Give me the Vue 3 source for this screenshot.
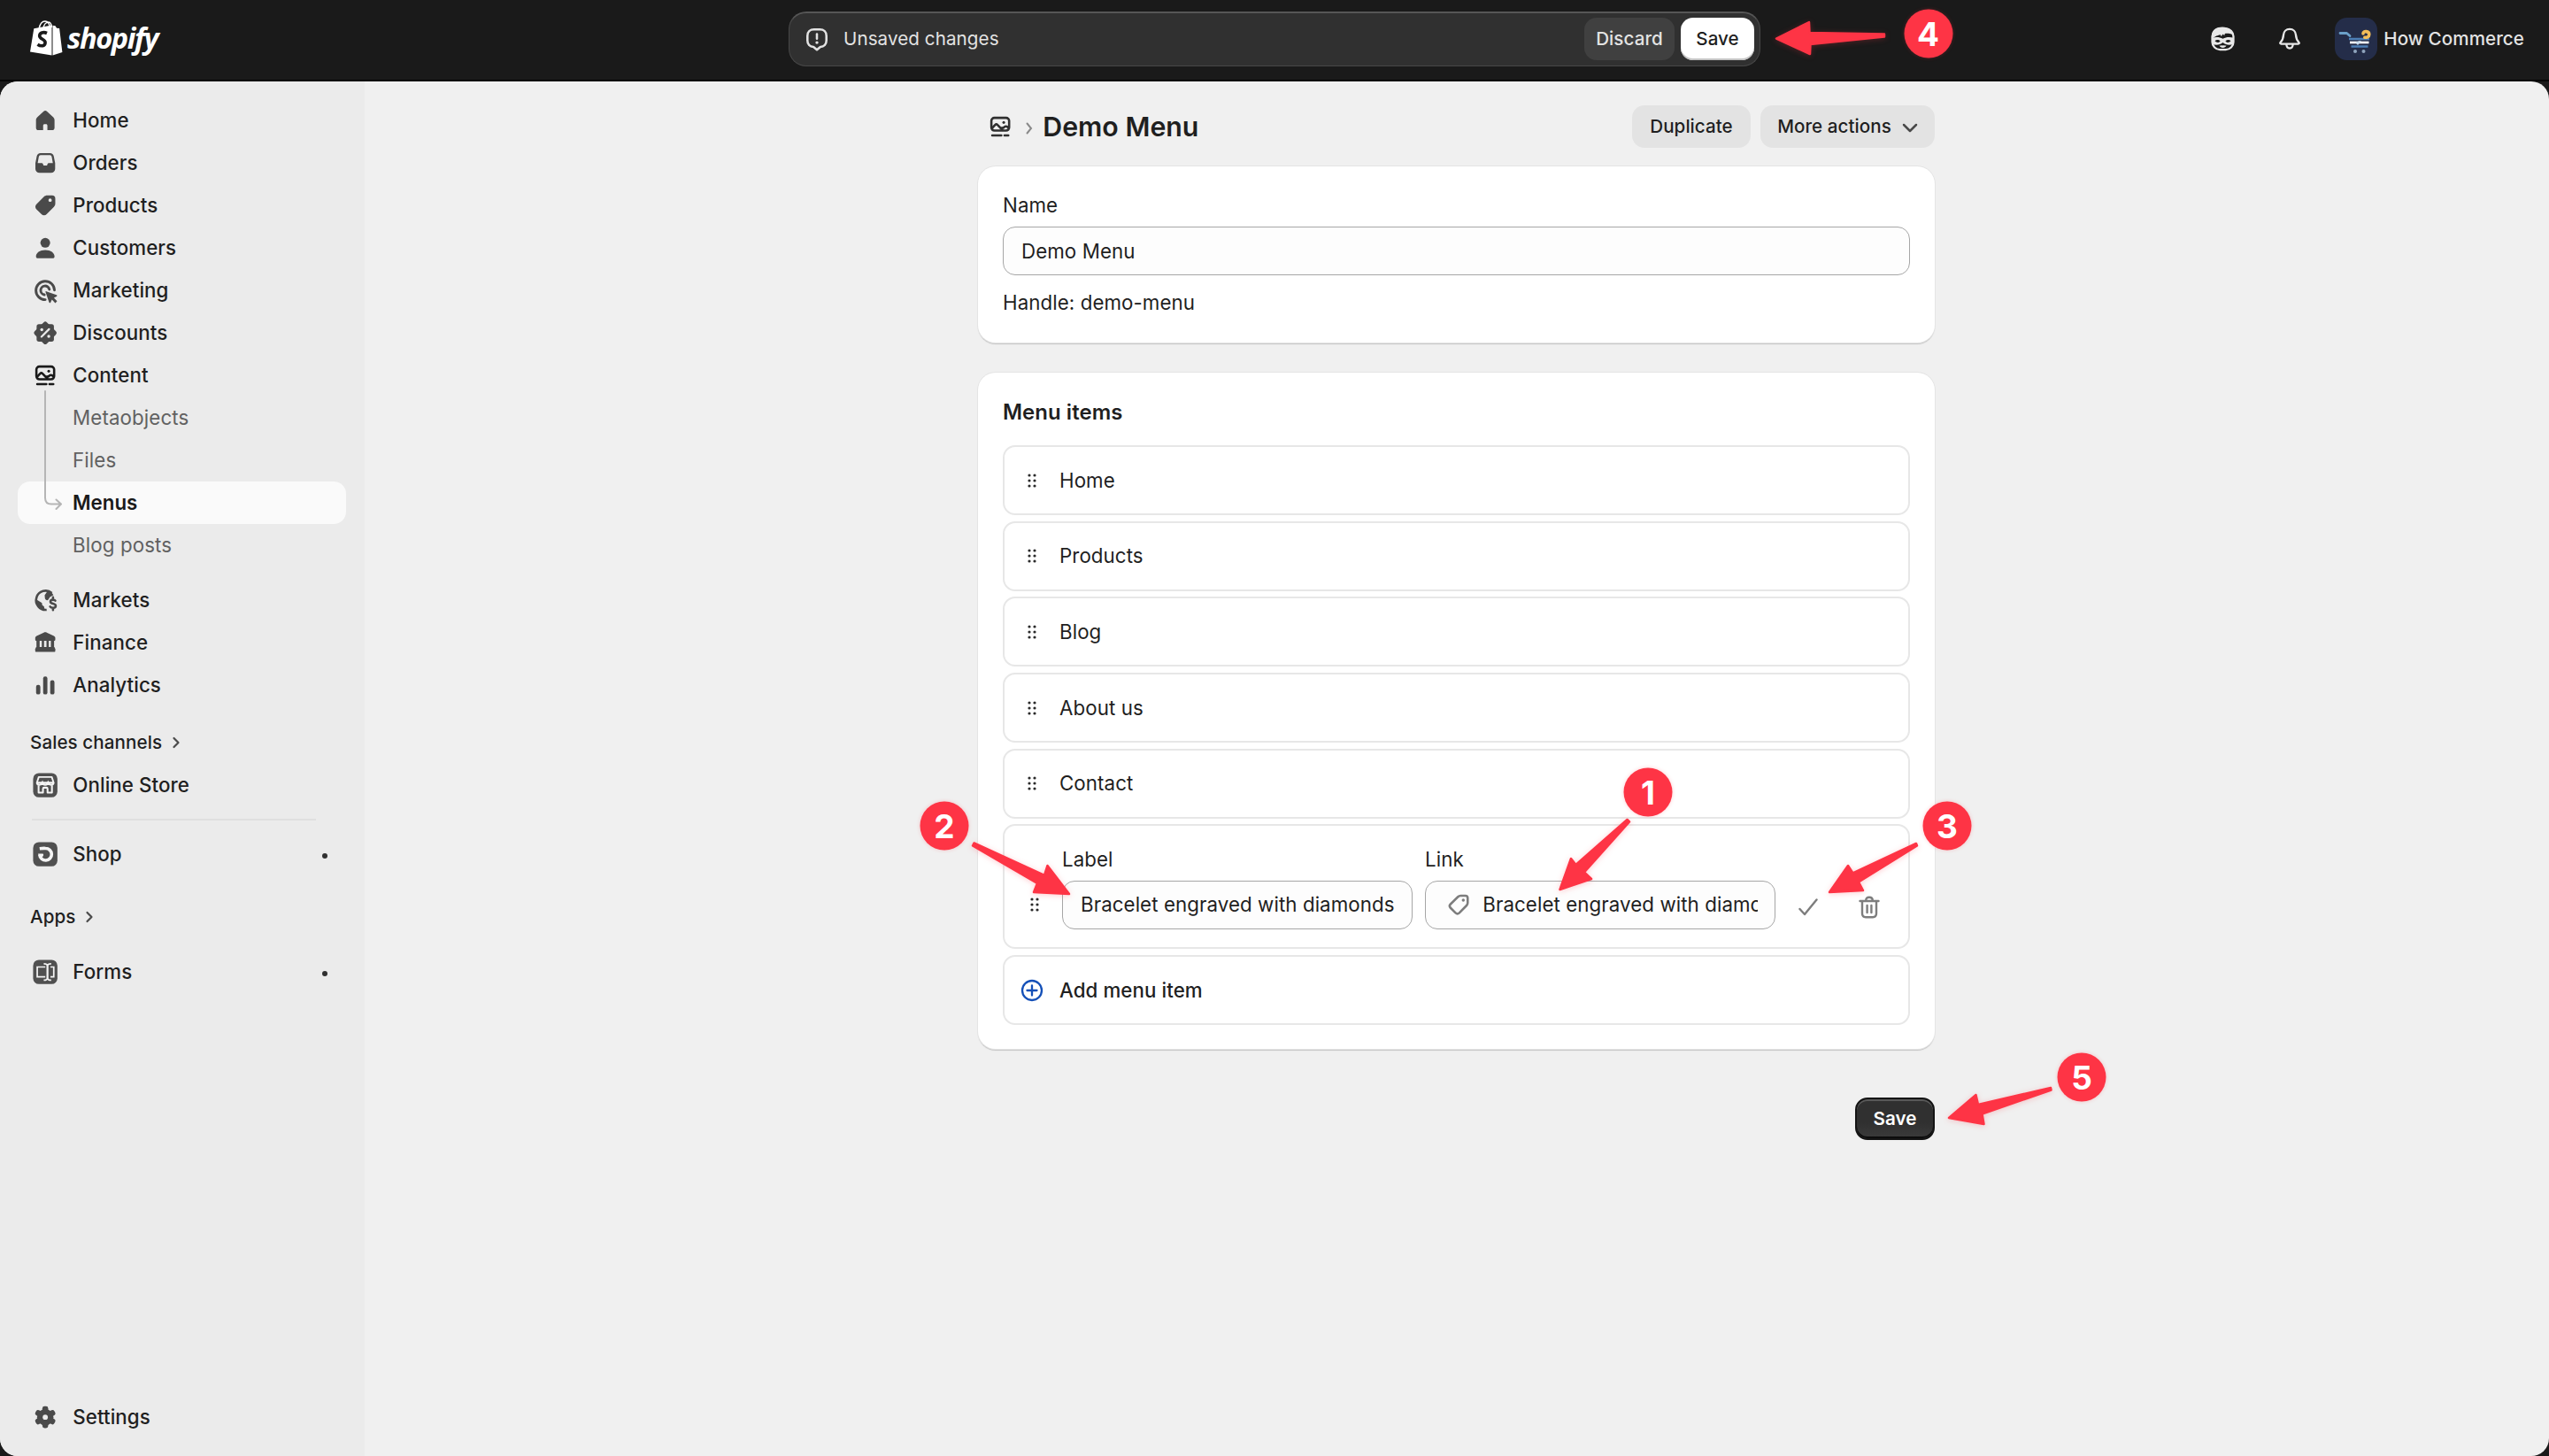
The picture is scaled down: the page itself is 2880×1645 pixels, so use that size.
<script setup>
const icons = {
  home: '<path d="M8.8 4.1a1.8 1.8 0 0 1 2.4 0l4.1 3.8c.5.5.8 1.1.8 1.8v5.1c0 .9-.7 1.6-1.6 1.6h-3.1v-3c0-.6-.4-1-1-1h-.8c-.6 0-1 .4-1 1v3H5.5c-.9 0-1.6-.7-1.6-1.6V9.700c0-.7.3-1.300.8-1.800Z"/>',
  orders: '<path fill-rule="evenodd" d="M6.900 3.500h6.200a2.600 2.600 0 0 1 2.500 2l.9 4.600v3.700a2.700 2.700 0 0 1-2.700 2.700H6.200a2.700 2.700 0 0 1-2.700-2.700v-3.700l.9-4.600a2.600 2.600 0 0 1 2.500-2Zm0 1.300a1.200 1.200 0 0 0-1.150 1L5 10.100h2.500c.5 0 .9.3 1.050.7l.3.8h2.300l.3-.8c.15-.4.55-.7 1.050-.7H15l-.75-4.300a1.200 1.200 0 0 0-1.150-1Z"/>',
  products: '<path fill-rule="evenodd" d="M11.300 3.400h3.200a2.100 2.100 0 0 1 2.100 2.100v3.300c0 .8-.3 1.500-.9 2.100l-4.800 4.900a2.400 2.400 0 0 1-3.400 0l-3.300-3.200a2.400 2.400 0 0 1 0-3.400l4.900-4.900c.6-.6 1.400-.9 2.200-.9Zm1.900 4.200a1.100 1.100 0 1 0 0-2.200 1.100 1.100 0 0 0 0 2.200Z"/>',
  customers: '<circle cx="10" cy="6.600" r="3.200"/><path d="M3.900 15.600c0-2.300 2.500-4.200 6.100-4.200s6.100 1.900 6.100 4.200c0 .8-.5 1.200-1.200 1.200H5.100c-.7 0-1.200-.4-1.200-1.200Z"/>',
  marketing: '<path fill="none" stroke="currentColor" stroke-width="1.700" stroke-linecap="round" d="M16.050 9.800A6.100 6.100 0 1 0 10 16.100"/><path fill="none" stroke="currentColor" stroke-width="1.700" stroke-linecap="round" d="M12.700 9.300A2.900 2.900 0 1 0 9.400 12.800"/><path d="M10.700 10.600l6.700 2.400c.5.200.5.8 0 1l-1.700.9 2.100 2.200-1.200 1.200-2.200-2.200-.9 1.800c-.2.500-.8.400-1-.1l-2.300-6.700c-.1-.4.200-.7.500-.5Z"/>',
  discounts: '<rect x="4.300" y="4.300" width="11.400" height="11.400" rx="1.500"/><rect x="4.300" y="4.300" width="11.400" height="11.400" rx="1.500" transform="rotate(45 10 10)"/><path stroke="#ebebeb" stroke-width="1.300" stroke-linecap="round" d="M12.500 7.500l-5 5"/><circle cx="7.700" cy="7.900" r="1" fill="#ebebeb"/><circle cx="12.300" cy="12.200" r="1" fill="#ebebeb"/>',
  content: '<g fill="none" stroke="currentColor" stroke-width="1.500" stroke-linejoin="round"><rect x="4.150" y="4.150" width="11.700" height="8.400" rx="2"/><path d="M4.400 11.200l2.200-2.400c.5-.5 1.100-.5 1.600 0l3.500 3.600M10.800 11.400c.4-1.100 1.100-.4 1.600-.9.7-1 1.800-1 3.200.3"/><path stroke-linecap="round" d="M4.700 15.700h6M12.800 15.700h2.500"/></g><circle cx="12.300" cy="7.200" r=".9"/>',
  markets: '<path fill="none" stroke="currentColor" stroke-width="1.500" d="M14.300 5.200A6.300 6.300 0 1 0 10.900 16.300"/><path d="M3.600 9.200l3.800 2.300c.6.400.6 1 .5 1.600l1.300 1.100.4 2.300c-3.500 0-6.200-3-6-7.300ZM9.600 6.700l1.700-2.400 2.900.6 1.200 1.700-2.300 1.300-1.200 1.900c-.6.700-2-.1-2.100-1Z"/><path fill="none" stroke="currentColor" stroke-width="1.500" stroke-linecap="round" d="M16.600 10.300c-.5-.8-3.200-1-3.200.6 0 1.800 3.500.9 3.500 2.800 0 1.700-3 1.600-3.700.5M15.100 8.100v1M15.100 15.500v1"/>',
  finance: '<path d="M9 3.300c.6-.3 1.400-.3 2 0l4.700 2.200c.5.300.9.700.9 1.300v1.100c0 .6-.3.9-.9.9H4.300c-.6 0-.9-.3-.9-.9V6.800c0-.6.4-1 .9-1.300ZM4.200 8.500h2.100v4.900H4.200zM7.700 8.500h1.500v4.900H7.700zM10.800 8.500h1.500v4.900h-1.500zM13.700 8.500h2.100v4.900h-2.100z"/><path d="M4 12.900h12l.6 1.200v1.300c0 .4-.2.700-.6.700H4c-.4 0-.6-.3-.6-.7v-1.300Z"/>',
  analytics: '<rect x="3.950" y="9.800" width="2.800" height="6.300" rx="1.300"/><rect x="8.600" y="4.300" width="2.800" height="11.800" rx="1.300"/><rect x="13.250" y="6.700" width="2.800" height="9.400" rx="1.300"/>',
  store: '<rect x="2" y="2" width="16" height="16" rx="3.800" fill="#505050"/><path d="M5.700 4.600h8.600l1.200 3.700H4.500Z" fill="none" stroke="#f4f4f4" stroke-width="1.100" stroke-linejoin="round"/><path fill="none" stroke="#f4f4f4" stroke-width="1.400" d="M4.600 8.400c.3 1.700 2.600 1.700 3.500 0 .6 1.600 3.200 1.600 3.800 0 .9 1.700 3.200 1.700 3.500 0"/><path fill="none" stroke="#f4f4f4" stroke-width="1.200" stroke-linejoin="round" d="M5.600 10v4.900h2.900v-2.500c0-.5.300-.8.800-.8h1.400c.5 0 .8.300.8.800v2.500h2.900V10"/>',
  shop: '<rect x="2" y="2" width="16" height="16" rx="3.800" fill="#505050"/><path d="M6.300 6.300c1.400-.2 2.400-.3 3.900-.2a3.950 3.950 0 1 1-3.900 4.300" fill="none" stroke="#f4f4f4" stroke-width="2.100" stroke-linejoin="round"/><path d="M5.300 9.600h3.100c.6.200.6 1.700-.6 2.200-1.300.3-2.500-.8-2.500-2.200Z" fill="#f4f4f4"/>',
  forms: '<rect x="2" y="2" width="16" height="16" rx="3.800" fill="#505050"/><path d="M10 6.700H4.700v6.500H10M13.400 6.700h2.200v6.500h-2.200M9 4.600c1.300 0 2.300.4 2.300 1.300v8.200c0 .9-1 1.300-2.300 1.300M13.900 4.600c-1.300 0-2.300.4-2.300 1.300v8.200c0 .9 1 1.300 2.300 1.300" fill="none" stroke="#f4f4f4" stroke-width="1"/>',
  settings: '<circle cx="10" cy="10" r="5.400"/><rect x="8.100" y="2.800" width="3.800" height="14.400" rx="1.400"/><rect x="8.100" y="2.800" width="3.800" height="14.400" rx="1.400" transform="rotate(60 10 10)"/><rect x="8.100" y="2.800" width="3.800" height="14.400" rx="1.400" transform="rotate(120 10 10)"/><circle cx="10" cy="10" r="1.700" fill="#ebebeb"/>',
}

const primary = [
  { label: 'Home', icon: 'home' },
  { label: 'Orders', icon: 'orders' },
  { label: 'Products', icon: 'products' },
  { label: 'Customers', icon: 'customers' },
  { label: 'Marketing', icon: 'marketing' },
  { label: 'Discounts', icon: 'discounts' },
  { label: 'Content', icon: 'content', current: true },
]
const contentPages = ['Metaobjects', 'Files', 'Menus', 'Blog posts']
const secondary = [
  { label: 'Markets', icon: 'markets' },
  { label: 'Finance', icon: 'finance' },
  { label: 'Analytics', icon: 'analytics' },
]
const menuItems = ['Home', 'Products', 'Blog', 'About us', 'Contact']

const steps = [
  { n: 1, x: 1862, y: 895, arrow: '1838.500,926 1780.500,977 1775,970 1762.500,1005 1798,993 1790,985.500 1841,928.500' },
  { n: 2, x: 1067, y: 933, arrow: '1100.500,952.500 1180,989 1183.500,978 1208,1010 1168,1008 1172,998 1099,955.500' },
  { n: 3, x: 2200, y: 933, arrow: '2165,953 2093.500,986.500 2088,978 2067,1008 2105,1006 2100,996.500 2166,955.500' },
  { n: 4, x: 2178.500, y: 38, arrow: '2129,38.500 2044.500,37 2044,25 2007,43.500 2045,61 2045.500,50 2129,41.500' },
  { n: 5, x: 2352, y: 1217, arrow: '2317,1229 2235,1248 2232.500,1237 2202,1263 2241.500,1270 2239.500,1258.500 2317.500,1231.500' },
]
</script>

<template>
  <div class="app">
    <header class="topbar">
      <div class="logo">
        <svg class="bag" viewBox="0 0 38 42">
          <path fill="none" stroke="#fff" stroke-width="1.500" d="M10 11C11 5 14 2 17 2c3 0 5 3 5.500 8M15 10c.5-4 3-7 6-7 2 0 3 2 3.500 6" />
          <path fill="#fff" d="M4.300 10.300 24.500 6.500V40.500L0 36.500Z" />
          <path fill="#fff" d="M25.500 6.700 28.500 7.200l1.600 2.500 3 .4L36.400 37 25.500 40.500Z" />
          <path fill="none" stroke="#1a1a1a" stroke-width="3.600" d="M19 15.500c-4-1.800-8.300-.5-8.300 3 0 4 6.400 3.500 6.400 7.500 0 4-4.500 5-8.600 2.200" />
        </svg>
        <span class="wordmark">shopify</span>
      </div>

      <div class="savebar">
        <svg class="alert" viewBox="0 0 20 20">
          <path fill="none" stroke="currentColor" stroke-width="1.500" stroke-linejoin="round" d="M8 3.700h4c2.500 0 4.300 1.700 4.300 4.200v3.200c0 2.500-1.600 4.100-4 4.200L10 17.200l-2.300-1.900c-2.400-.1-4-1.700-4-4.200V7.900C3.700 5.400 5.500 3.700 8 3.700Z" />
          <path stroke="currentColor" stroke-width="1.500" stroke-linecap="round" d="M10 6.800v3" />
          <circle cx="10" cy="12.400" r="1" fill="currentColor" />
        </svg>
        <span class="unsaved">Unsaved changes</span>
        <button class="btn discard">Discard</button>
        <button class="btn save-light">Save</button>
      </div>

      <div class="account">
        <svg class="sidekick" viewBox="0 0 28 28">
          <rect x="1.600" y="2" width="24.800" height="24.500" rx="9" fill="none" stroke="#e8e8e8" stroke-width="2.400" />
          <path fill="#e8e8e8" d="M1 10C1.500 3 6.500 0 13.500 0S26 3.500 27 10c-2.500-2-5-2.500-9-2.500-1.500 0-2 .5-2.200 2.500-.8-.6-1-1-1.300-1.700-1 .5-1.800 1.200-2 2.700-.8-.7-1-1-1.200-1.900C8 9.800 5.500 10.500 1 14Z" />
          <path fill="#e8e8e8" fill-rule="evenodd" d="M1.500 12.800c4-1.300 8.500-1.300 12.500 1 4-2.300 8.500-2.300 12.500-1V20c-4.500 1.800-9 1.300-12.500-1.800C10.500 21.300 6 21.800 1.500 20Zm3.200 3.500c2 2.300 4.500 2.300 6.300.2-2-2-4.500-2-6.300-.2Zm12.300.2c1.800 2.100 4.300 2.100 6.300-.2-1.800-1.800-4.300-1.800-6.300.2Z" />
          <path fill="#e8e8e8" d="M9.800 21.600c1.400.6 2.400-.6 4.200.2 1.800-.8 2.800.4 4.200-.2-.8 1.800-2.300 2.700-4.200 2.700s-3.400-.9-4.200-2.700Z" />
        </svg>
        <svg class="bell" viewBox="0 0 28 30" fill="none" stroke="#e8e8e8" stroke-width="2.500" stroke-linejoin="round">
          <path d="M14 3c-4.500 0-7.200 3-7.500 7-.3 4.500-.8 6-3.600 9-1 1.200-.4 2 .8 2h20.600c1.200 0 1.800-.8.8-2-2.800-3-3.300-4.500-3.600-9-.3-4-3-7-7.500-7ZM10 21.500c.2 3 1.800 4.800 4 4.800s3.800-1.800 4-4.800" />
        </svg>
        <div class="store">
          <svg class="store-logo" viewBox="0 0 48 48">
            <rect width="48" height="48" rx="13.700" fill="#242d49" />
            <path fill="none" stroke="#6ba0c8" stroke-width="2.800" stroke-linecap="round" stroke-linejoin="round" d="M6 17.500h7.500l3.500 3" />
            <path stroke="#4d7fb5" stroke-width="2.400" d="M16 24h23M18.500 32.500h19" />
            <path stroke="#fff" stroke-width="2.600" d="M17 28h21.500" />
            <path fill="#c9dcee" d="M23 28l3 3 4-4.500-2-.5Z" />
            <path fill="none" stroke="#f2bd58" stroke-width="3.600" stroke-linecap="round" d="M32 18c0-3.500 6.800-3.200 6.800 1 0 3-3 3.500-5 3.200" />
            <circle cx="23" cy="38" r="2" fill="#8fa4bd" />
            <circle cx="32.500" cy="38" r="2" fill="#8fa4bd" />
          </svg>
          <span>How Commerce</span>
        </div>
      </div>
    </header>

    <div class="frame">
      <aside class="sidebar">
        <nav>
          <a v-for="item in primary" :key="item.label" class="nav-item" :class="{ current: item.current }">
            <svg class="icon" viewBox="0 0 20 20" fill="currentColor" v-html="icons[item.icon]" />
            <span>{{ item.label }}</span>
          </a>
          <div class="subnav">
            <a v-for="page in contentPages" :key="page" class="nav-item sub" :class="{ selected: page === 'Menus' }">{{ page }}</a>
            <svg class="branch" viewBox="0 0 24 136" fill="none" stroke="#b5b5b5" stroke-width="2" stroke-linecap="round" stroke-linejoin="round">
              <path d="M3 1v120.500c0 5 2 7 7 7h10.500M15.500 123.500l5.500 5-5.500 5.500" />
            </svg>
          </div>
          <div class="nav-group">
            <a v-for="item in secondary" :key="item.label" class="nav-item">
              <svg class="icon" viewBox="0 0 20 20" fill="currentColor" v-html="icons[item.icon]" />
              <span>{{ item.label }}</span>
            </a>
          </div>
          <div class="nav-title channels">
            Sales channels
            <svg viewBox="0 0 10 14"><path d="M2.500 2l5 5-5 5" /></svg>
          </div>
          <a class="nav-item">
            <svg class="icon" viewBox="0 0 20 20" v-html="icons.store" />
            <span>Online Store</span>
          </a>
          <hr />
          <a class="nav-item shop">
            <svg class="icon" viewBox="0 0 20 20" v-html="icons.shop" />
            <span>Shop</span>
            <i class="dot"></i>
          </a>
          <div class="nav-title apps">
            Apps
            <svg viewBox="0 0 10 14"><path d="M2.500 2l5 5-5 5" /></svg>
          </div>
          <a class="nav-item forms">
            <svg class="icon" viewBox="0 0 20 20" v-html="icons.forms" />
            <span>Forms</span>
            <i class="dot"></i>
          </a>
        </nav>
        <a class="nav-item">
          <svg class="icon" viewBox="0 0 20 20" fill="currentColor" v-html="icons.settings" />
          <span>Settings</span>
        </a>
      </aside>

      <main class="page">
        <div class="page-head">
          <svg class="icon crumb" viewBox="0 0 20 20" fill="currentColor" v-html="icons.content" />
          <svg class="crumb-sep" viewBox="0 0 8 14"><path d="M1.500 1.500 6 7l-4.500 5.500" /></svg>
          <h1>Demo Menu</h1>
          <button class="btn grey duplicate">Duplicate</button>
          <button class="btn grey more">
            More actions
            <svg viewBox="0 0 18 12"><path d="M2 2l7 7 7-7" /></svg>
          </button>
        </div>

        <section class="card name-card">
          <label>Name</label>
          <div class="input">Demo Menu</div>
          <p>Handle: demo-menu</p>
        </section>

        <section class="card items-card">
          <h2>Menu items</h2>
          <div class="rows">
            <div v-for="item in menuItems" :key="item" class="row">
              <svg class="drag" viewBox="0 0 10 16">
                <template v-for="y in [2, 8, 14]" :key="y">
                  <circle cx="2" :cy="y" r="1.600" /><circle cx="8" :cy="y" r="1.600" />
                </template>
              </svg>
              <span>{{ item }}</span>
            </div>

            <div class="row edit">
              <svg class="drag" viewBox="0 0 10 16">
                <template v-for="y in [2, 8, 14]" :key="y">
                  <circle cx="2" :cy="y" r="1.600" /><circle cx="8" :cy="y" r="1.600" />
                </template>
              </svg>
              <div class="field">
                <label>Label</label>
                <div class="input">Bracelet engraved with diamonds</div>
              </div>
              <div class="field link">
                <label>Link</label>
                <div class="input">
                  <svg class="tag" viewBox="0 0 20 20">
                    <path fill="none" stroke="currentColor" stroke-width="1.500" stroke-linejoin="round" d="M11.200 4.100h3.200c.9 0 1.500.6 1.500 1.500v3.200c0 .7-.2 1.200-.7 1.700l-4.800 4.900a1.800 1.800 0 0 1-2.500 0l-3.300-3.300a1.800 1.800 0 0 1 0-2.500l4.900-4.800c.5-.5 1-.7 1.700-.7Z" />
                    <circle cx="13" cy="7" r="1" fill="currentColor" />
                  </svg>
                  <span class="clip">Bracelet engraved with diamonds</span>
                </div>
              </div>
              <svg class="check" viewBox="0 0 22 20"><path d="M1.500 12l5.500 6L20.500 1.500" /></svg>
              <svg class="trash" viewBox="0 0 24 26">
                <path d="M1.500 6h21M8.200 5.500C8.200 3 9.600 1.800 12 1.800s3.800 1.200 3.800 3.700M4 6.500v13.500c0 3 1.500 4.200 4 4.200h8c2.500 0 4-1.200 4-4.200V6.500M9.600 11v8M14.400 11v8" />
              </svg>
            </div>

            <div class="row add">
              <svg class="plus" viewBox="0 0 26 26"><circle cx="13" cy="13" r="11" /><path d="M13 7.500v11M7.500 13h11" /></svg>
              <span>Add menu item</span>
            </div>
          </div>
        </section>

        <button class="btn save-dark">Save</button>
      </main>
    </div>

    <div class="steps">
      <svg class="arrows" viewBox="0 0 2880 1645">
        <polygon v-for="s in steps" :key="s.n" :points="s.arrow" fill="#fe3445" stroke="#fe3445" stroke-width="2.500" stroke-linejoin="round" />
      </svg>
      <b v-for="s in steps" :key="s.n" class="badge" :style="{ left: s.x + 'px', top: s.y + 'px' }">{{ s.n }}</b>
    </div>
  </div>
</template>

<style>
body {
  background: #1a1a1a;
}
</style>

<style scoped>
* {
  box-sizing: border-box;
}
.app {
  position: relative;
  width: 2880px;
  height: 1645px;
  overflow: hidden;
  background: #1a1a1a;
  color: #1f1f1f;
  font-family: Inter, "Liberation Sans", sans-serif;
  font-size: 22.300px;
  letter-spacing: 0.080px;
  line-height: 34px;
}
svg {
  display: block;
  flex: none;
}
h1, h2, p {
  margin: 0;
}

/* Top bar */
.topbar {
  display: grid;
  grid-template-columns: 1fr 1098px 1fr;
  height: 92px;
  padding: 13px 28px 0 34px;
  border-bottom: 2px solid #050505;
}
.logo {
  display: flex;
  height: 62px;
}
.bag {
  width: 38px;
  height: 42px;
  margin-top: 9px;
}
.wordmark {
  margin: 13px 0 0 4px;
  color: #fff;
  font: italic 700 32.500px/34px "Open Sans", sans-serif;
  letter-spacing: -1.400px;
}
.savebar {
  display: flex;
  align-items: center;
  width: 1098px;
  height: 62px;
  margin-left: -3px;
  padding: 0 6px 1px 14px;
  border: 1.500px solid #484848;
  border-top: 2px solid #565656;
  border-radius: 20px;
  background: #303030;
  color: #e3e3e3;
}
.alert {
  width: 34px;
  height: 34px;
}
.unsaved {
  flex: 1;
  margin-left: 13px;
  font-size: 20.600px;
  letter-spacing: 0.080px;
}
.btn {
  display: flex;
  align-items: center;
  justify-content: center;
  height: 48px;
  padding: 0;
  border: 0;
  border-radius: 14px;
  font: 500 20.600px/28px Inter, sans-serif;
  letter-spacing: 0.050px;
}
.discard {
  width: 102px;
  background: #404040;
  color: #e3e3e3;
}
.save-light {
  width: 83px;
  margin-left: 7px;
  background: #fff;
  color: #1f1f1f;
  box-shadow: inset 0 -2px 0 #c4c4c4;
}
.account {
  display: flex;
  align-items: center;
  justify-content: flex-end;
  height: 62px;
}
.sidekick {
  width: 27px;
  height: 28px;
}
.bell {
  width: 26px;
  height: 28px;
  margin: 0 38px 0 49px;
}
.store {
  display: flex;
  align-items: center;
  gap: 7px;
  color: #e3e3e3;
  font-size: 20.600px;
  font-weight: 500;
}
.store-logo {
  width: 48px;
  height: 48px;
}

/* Frame */
.frame {
  display: flex;
  height: 1553px;
  border-radius: 20px;
  background: #f0f0f0;
  overflow: hidden;
}
.sidebar {
  display: flex;
  flex-direction: column;
  justify-content: space-between;
  width: 412px;
  padding: 20px 21px 20px 20px;
  background: #ebebeb;
}
.nav-item {
  display: flex;
  align-items: center;
  height: 48px;
  padding: 0 21.500px 0 14px;
  border-radius: 14px;
  font-weight: 500;
}
.nav-item span {
  flex: 1;
  margin-left: 14px;
}
.icon {
  width: 34.300px;
  height: 34.300px;
  color: #4a4a4a;
}
.current .icon {
  color: #1a1a1a;
}
.subnav {
  position: relative;
}
.sub {
  padding-left: 62px;
  color: #616161;
  font-weight: 400;
  letter-spacing: 0.120px;
}
.sub.selected {
  background: #fafafa;
  color: #1a1a1a;
  font-weight: 600;
  letter-spacing: 0;
}
.branch {
  position: absolute;
  left: 28px;
  top: -7px;
  width: 24px;
  height: 136px;
}
.nav-group {
  margin-top: 14px;
}
.nav-title {
  display: flex;
  align-items: center;
  gap: 11px;
  height: 48px;
  padding-left: 14px;
  font-size: 20.600px;
  font-weight: 500;
}
.nav-title svg {
  width: 10px;
  height: 14px;
  fill: none;
  stroke: #4a4a4a;
  stroke-width: 2.200;
  stroke-linecap: round;
  stroke-linejoin: round;
}
.channels {
  margin-top: 17px;
}
hr {
  height: 2px;
  margin: 14px 34px 14px 16px;
  border: 0;
  background: #dfdfdf;
}
.dot {
  width: 6px;
  height: 6px;
  margin-top: 3px;
  border-radius: 50%;
  background: #303030;
}
.apps {
  margin-top: 23px;
}
.forms {
  margin-top: 14px;
}

/* Page */
.page {
  width: 1081px;
  margin-left: 693px;
}
.page-head {
  display: flex;
  align-items: center;
  height: 48px;
  margin-top: 27px;
}
.crumb {
  margin-left: 8px;
  color: #303030;
}
.crumb-sep {
  width: 8px;
  height: 14px;
  margin: 4px 0 0 12px;
  fill: none;
  stroke: #8a8a8a;
  stroke-width: 2;
  stroke-linecap: round;
}
h1 {
  flex: 1;
  margin-left: 11px;
  color: #1f1f1f;
  font-size: 30.300px;
  font-weight: 600;
  letter-spacing: 0;
}
.grey {
  background: #e3e3e3;
  color: #1f1f1f;
}
.duplicate {
  width: 134px;
}
.more {
  gap: 12px;
  width: 197px;
  margin-left: 11px;
}
.more svg {
  width: 18px;
  height: 12px;
  margin-top: 3px;
  fill: none;
  stroke: #4a4a4a;
  stroke-width: 2.500;
  stroke-linecap: round;
  stroke-linejoin: round;
}
.card {
  border-radius: 20px;
  background: #fff;
  box-shadow: 0 0 0 1px #e4e4e4, 0 2px 1px #c4c4c4;
}
.name-card {
  height: 199px;
  margin-top: 21px;
  padding: 27px 28px 0;
}
.input {
  display: flex;
  align-items: center;
  height: 55px;
  padding-left: 20px;
  border: 1.500px solid #a6a6a6;
  border-radius: 14px;
  background: #fdfdfd;
}
.name-card .input {
  margin-top: 7px;
}
.name-card label,
.field label {
  display: block;
}
.name-card p {
  margin-top: 14px;
}
.items-card {
  height: 764px;
  margin-top: 34px;
  padding: 28px 28px 0;
}
h2 {
  font-size: 23.900px;
  font-weight: 600;
}
.rows {
  display: flex;
  flex-direction: column;
  gap: 6.700px;
  margin-top: 20px;
}
.row {
  display: flex;
  align-items: center;
  height: 79px;
  padding-left: 26px;
  border: 2px solid #e7e7e7;
  border-radius: 14px;
}
.drag {
  width: 10px;
  height: 16px;
  fill: #2a2a2a;
}
.row > span {
  margin-left: 26px;
}
.edit {
  height: 141px;
  padding: 0 0 0 29px;
}
.edit .drag {
  margin-top: 40px;
}
.field {
  width: 396px;
  margin-left: 26px;
}
.field label {
  margin-bottom: 7px;
}
.field.link {
  margin-left: 14px;
}
.link .input {
  padding: 0 19px 0 20px;
}
.tag {
  width: 34.300px;
  height: 34.300px;
  color: #7d7d7d;
}
.clip {
  width: 311px;
  margin-left: 10px;
  overflow: hidden;
  white-space: nowrap;
}
.check {
  width: 22px;
  height: 20px;
  margin: 46px 0 0 26px;
}
.trash {
  width: 24px;
  height: 26px;
  margin: 46px 0 0 46px;
}
.check,
.trash {
  fill: none;
  stroke: #7d7d7d;
  stroke-width: 2.400;
  stroke-linecap: round;
  stroke-linejoin: round;
}
.add {
  padding-left: 18px;
  font-weight: 500;
}
.add > span {
  margin-left: 18px;
}
.plus {
  width: 26px;
  height: 26px;
  fill: none;
  stroke: #1450b8;
  stroke-width: 2.300;
  stroke-linecap: round;
}
.save-dark {
  width: 90px;
  margin: 55px 0 0 auto;
  border: 2px solid #141414;
  background: linear-gradient(#303030 60%, #3b3b3b);
  box-shadow: inset 0 2px 0 #585858, inset 0 -2px 0 #0c0c0c;
  color: #fff;
  font-weight: 600;
}

/* Walkthrough markers drawn over the page */
.steps {
  position: absolute;
  inset: 0;
}
.arrows {
  width: 2880px;
  height: 1645px;
  filter: drop-shadow(0 1px 3px rgba(254, 52, 69, 0.250));
}
.badge {
  position: absolute;
  display: flex;
  align-items: center;
  justify-content: center;
  width: 55px;
  height: 55px;
  transform: translate(-50%, -50%);
  border-radius: 50%;
  background: #fe3445;
  box-shadow: 0 0 4px rgba(254, 52, 69, 0.250);
  color: #fff;
  font-size: 37px;
  font-weight: 700;
}
</style>
